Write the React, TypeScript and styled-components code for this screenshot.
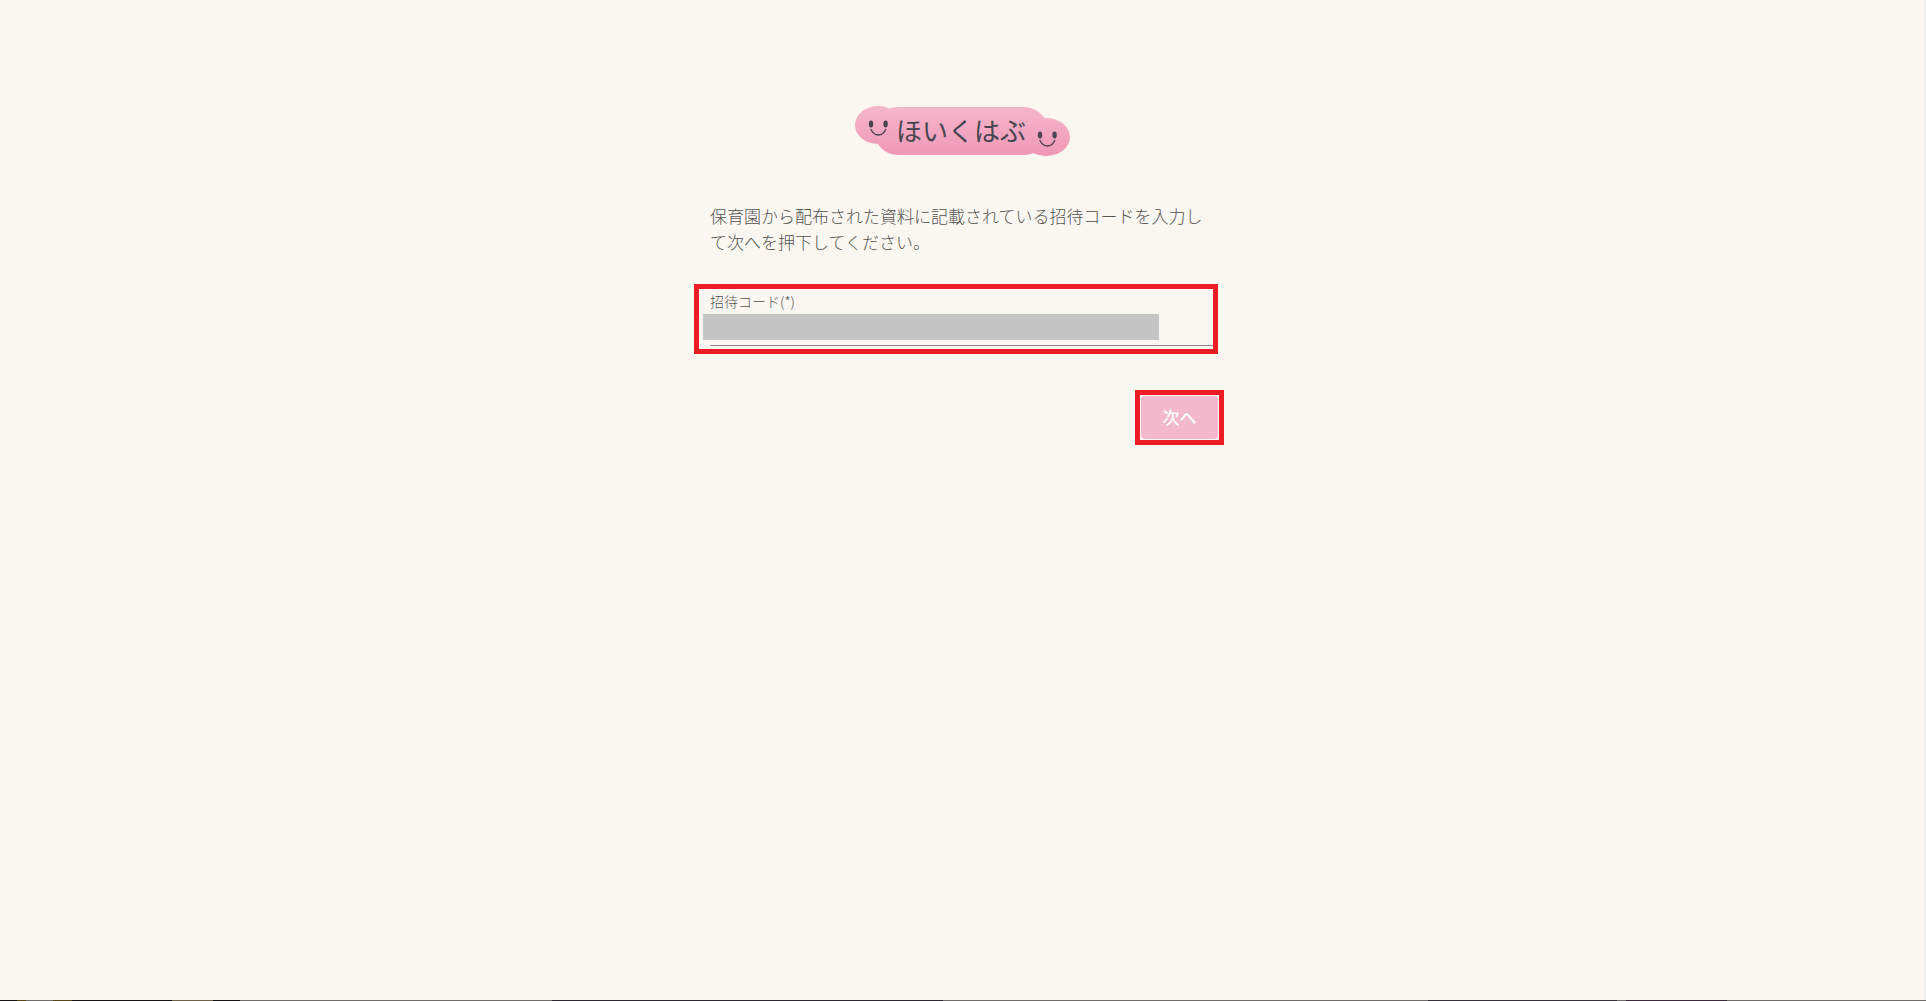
import React, { useState } from "react";
import styled, { createGlobalStyle } from "styled-components";

const GlobalStyle = createGlobalStyle`
  *, *::before, *::after { box-sizing: border-box; }
  body {
    margin: 0;
    background: #faf7f2;
    color: #555350;
    font-family: "Noto Sans CJK JP", sans-serif;
    font-weight: 300;
  }
`;

const Page = styled.div`
  min-height: 100vh;
  display: flex;
  flex-direction: column;
`;

const Body = styled.div`
  flex: 1;
  display: flex;
  justify-content: center;
  padding: 104px 16px 40px;
  border-right: 2px solid #f0f0f0;
`;

const Column = styled.main`
  width: 100%;
  max-width: 536px;
`;

const Logo = styled.svg`
  display: block;
  width: 220px;
  height: 54px;
  margin: 0 auto;
`;

const Lead = styled.p`
  margin: 45px 0 0;
  padding: 0 16px;
  font-size: 17px;
  line-height: 26px;
`;

const Field = styled.div`
  margin: 29px 12px 0 0;
  padding: 2px 0 3px 4px;
  border: 5px solid #ee1c25;
`;

const Label = styled.label`
  display: block;
  margin-bottom: 3px;
  padding-left: 7px;
  font-size: 14px;
  line-height: 20px;
`;

const Cover = styled.div`
  width: 456px;
  max-width: 100%;
  background: #c4c4c4;
`;

const Underline = styled.div`
  height: 1px;
  margin: 5px 0 0 7px;
  background: #8f8c8a;
`;

const CodeInput = styled.input`
  display: block;
  width: 100%;
  height: 26px;
  padding: 0 7px;
  border: 0;
  outline: 0;
  background: transparent;
  color: inherit;
  font: inherit;
`;

const Actions = styled.div`
  display: flex;
  justify-content: flex-end;
  margin-top: 36px;
  padding-right: 6px;
`;

const Highlight = styled.div`
  padding: 1px;
  border: 5px solid #ee1c25;
  background: #fffafa;
`;

const NextButton = styled.button`
  display: block;
  width: 77px;
  height: 43px;
  padding: 0 0 2px;
  border: 0;
  border-radius: 4px;
  background: #f4b8cd;
  color: #fff;
  font-family: inherit;
  font-size: 17px;
  font-weight: 500;
  cursor: pointer;
`;

const BottomEdge = styled.div`
  height: 1px;
  background: linear-gradient(
    to right,
    #151214 17px, #5a4516 17px 26px, #6f6c6b 26px 53px, #5a4516 53px 72px,
    #151214 72px 172px, #6f6048 172px 213px, #151214 213px 240px,
    #6f6c6b 240px 552px, #2c2a30 552px 943px, #6f6c6b 943px 1428px,
    #343238 1428px 1617px, #6f6c6b 1617px 1626px, #3a2a3c 1626px 1727px,
    #6f6c6b 1727px
  );
`;

function Face({ x, y }: { x: number; y: number }) {
  return (
    <g transform={`translate(${x} ${y})`} fill="#47454f">
      <ellipse cx="-7" cy="0" rx="2.2" ry="3.4" />
      <ellipse cx="7.6" cy="0" rx="2.2" ry="3.4" />
      <path d="M-7.3 5C-3.5 13 4.5 13 8 5" fill="none" stroke="#47454f" strokeWidth="1.3" />
    </g>
  );
}

export default function App() {
  const [code, setCode] = useState("");
  return (
    <>
      <GlobalStyle />
      <Page>
        <Body>
          <Column>
            <Logo viewBox="0 0 220 54" role="img" aria-label="ほいくはぶ">
              <defs>
                <linearGradient id="pink" gradientUnits="userSpaceOnUse" x1="0" y1="2" x2="0" y2="52">
                  <stop offset="0" stopColor="#f5b7cc" />
                  <stop offset="1" stopColor="#f097b6" />
                </linearGradient>
              </defs>
              <g fill="url(#pink)">
                <rect x="22" y="3" width="174" height="48" rx="24" />
                <ellipse cx="26" cy="21" rx="23" ry="19" />
                <ellipse cx="194" cy="33" rx="24" ry="19" />
              </g>
              <Face x={26} y={20} />
              <Face x={195} y={31} />
              <text x="44" y="37" fontSize="26" fontWeight="400" fill="#47454f">
                ほいくはぶ
              </text>
            </Logo>
            <Lead>
              保育園から配布された資料に記載されている招待コードを入力して次へを押下してください。
            </Lead>
            <Field>
              <Label htmlFor="code">招待コード(*)</Label>
              <Cover>
                <CodeInput id="code" value={code} onChange={(e) => setCode(e.target.value)} />
              </Cover>
              <Underline />
            </Field>
            <Actions>
              <Highlight>
                <NextButton type="button">次へ</NextButton>
              </Highlight>
            </Actions>
          </Column>
        </Body>
        <BottomEdge />
      </Page>
    </>
  );
}
